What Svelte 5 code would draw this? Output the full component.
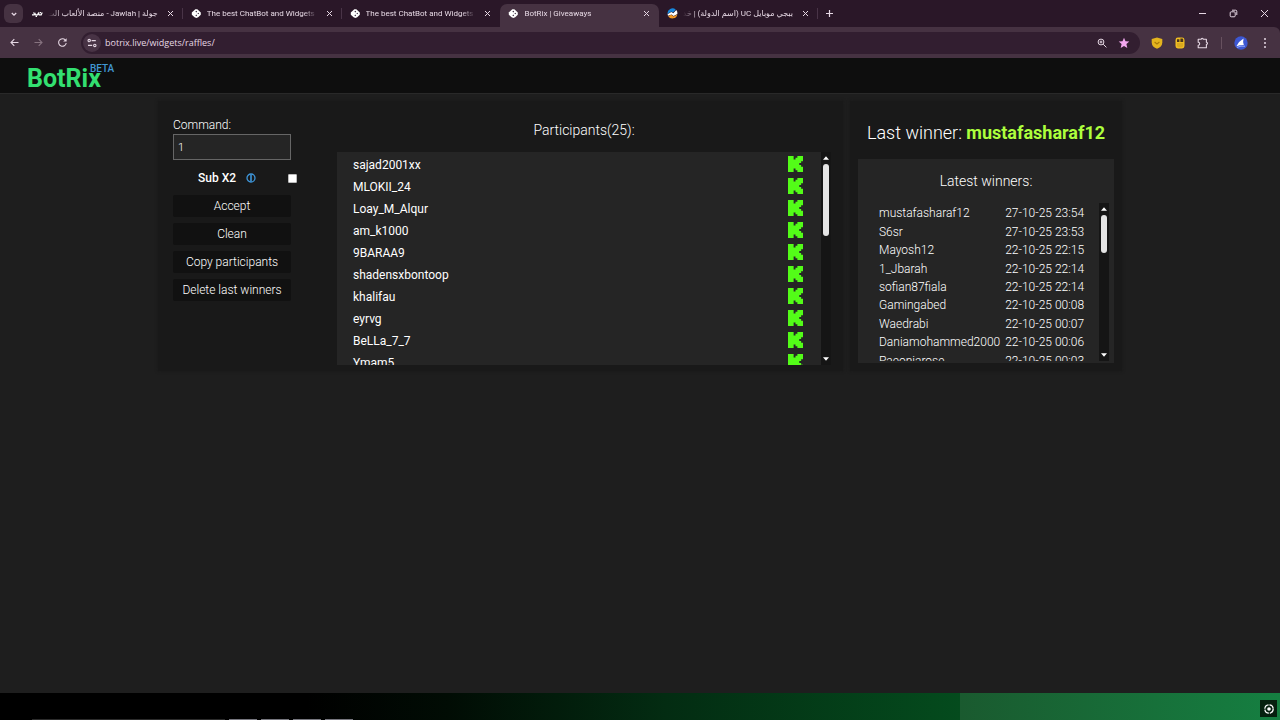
<script>
  const tabs = [
    { title: 'جولة | Jawlah - منصة الألعاب الت', icon: 'jawlah', rtl: true },
    { title: 'The best ChatBot and Widgets f', icon: 'botrix' },
    { title: 'The best ChatBot and Widgets f', icon: 'botrix' },
    { title: 'BotRix | Giveaways', icon: 'botrix', active: true },
    { title: 'ببجي موبايل UC (اسم الدولة) | خد', icon: 'globe', rtl: true }
  ];
  const participants = [
    'sajad2001xx', 'MLOKII_24', 'Loay_M_Alqur', 'am_k1000', '9BARAA9',
    'shadensxbontoop', 'khalifau', 'eyrvg', 'BeLLa_7_7', 'Ymam5'
  ];
  const winners = [
    ['mustafasharaf12', '27-10-25 23:54'],
    ['S6sr', '27-10-25 23:53'],
    ['Mayosh12', '22-10-25 22:15'],
    ['1_Jbarah', '22-10-25 22:14'],
    ['sofian87fiala', '22-10-25 22:14'],
    ['Gamingabed', '22-10-25 00:08'],
    ['Waedrabi', '22-10-25 00:07'],
    ['Daniamohammed2000', '22-10-25 00:06'],
    ['Paeoniarose', '22-10-25 00:03']
  ];
  const actions = ['Accept', 'Clean', 'Copy participants', 'Delete last winners'];
  let command = $state('1');
  let subX2 = $state(false);
</script>

{#snippet cross()}
  <svg width="7" height="7" viewBox="0 0 7 7" fill="none" stroke="currentColor" stroke-width="1"><path d="M1 1l5 5M6 1L1 6" /></svg>
{/snippet}

{#snippet scrollbar()}
  <div class="scrollbar" aria-hidden="true">
    <svg width="6" height="4" viewBox="0 0 6 4" fill="#fff"><path d="M3 0.3L6 3.7H0z" /></svg>
    <div class="track"><div class="thumb"></div></div>
    <svg width="6" height="4" viewBox="0 0 6 4" fill="#fff"><path d="M3 3.7L6 0.3H0z" /></svg>
  </div>
{/snippet}

<div class="screen">
  <header class="browser">
    <div class="strip">
      <button class="search-tabs" aria-label="Search tabs">
        <svg width="8" height="8" viewBox="0 0 8 8" fill="none" stroke="currentColor" stroke-width="1.3"><path d="M1.8 3L4 5.2 6.2 3" /></svg>
      </button>
      <div class="tabs">
        {#each tabs as tab, i}
          <div class="tab" class:active={tab.active} class:divided={i !== 2 && !tab.active}>
            {#if tab.icon === 'jawlah'}
              <svg width="11" height="11" viewBox="0 0 11 11" fill="none" stroke="#fff" stroke-width="1.2"><path d="M0 6.800h2.200l.7-1.500.7 1.500h2l.8-1.600.8 1.600h2l1-2.200M7.600 4.600h1.400M3.600 8.400h1.400M1 5h1" /></svg>
            {:else if tab.icon === 'botrix'}
              <svg width="11" height="11" viewBox="0 0 11 11"><path d="M4.300 1.200h2L9.800 4.500v2.200L7.200 9.300l-1.800.8-1.800-.8L.8 6.700V4.500z" fill="#fff" /><path d="M5.300 2.700l.9.9-.9.9-.9-.9zM7.300 4.700l.8.8-.8.8-.9-.8zM5.300 6.600l.8.8-.8.8-.9-.8z" fill="#33263a" /></svg>
            {:else}
              <svg width="11" height="11" viewBox="0 0 11 11"><path d="M.5 6A5 5 0 0 1 8.800 1.700L6 4.400 4.200 3.500z" fill="#1687dd" /><path d="M.6 6.200l3.700-2.300 2 1.300 3-3.100A5 5 0 0 1 10.400 6L6.600 8 4.400 6.400 1 7.800z" fill="#fff" /><path d="M1.200 8.200l3-1.500L6.600 8.400l3.700-2A5 5 0 0 1 1.200 8.200z" fill="#f49a26" /></svg>
            {/if}
            <span class="title" dir={tab.rtl ? 'rtl' : 'ltr'}>{tab.title}</span>
            <button class="bare" aria-label="Close tab">{@render cross()}</button>
          </div>
        {/each}
      </div>
      <button class="bare plus" aria-label="New tab">
        <svg width="9" height="9" viewBox="0 0 9 9" fill="none" stroke="currentColor" stroke-width="1.2"><path d="M4.5 1v7M1 4.5h7" /></svg>
      </button>
      <div class="window">
        <button class="bare" aria-label="Minimize"><svg width="9" height="9" viewBox="0 0 9 9" stroke="currentColor"><path d="M1 4.5h7" /></svg></button>
        <button class="bare" aria-label="Restore"><svg width="9" height="9" viewBox="0 0 9 9" fill="none" stroke="currentColor"><rect x="1.2" y="2.8" width="5" height="5" rx="1" /><path d="M3 1.2h3.6a1.2 1.2 0 0 1 1.2 1.2V6" /></svg></button>
        <button class="bare" aria-label="Close"><svg width="9" height="9" viewBox="0 0 9 9" stroke="currentColor"><path d="M1 1l7 7M8 1L1 8" /></svg></button>
      </div>
    </div>

    <div class="toolbar">
      <div class="nav">
        <button class="bare" aria-label="Back"><svg width="11" height="11" viewBox="0 0 11 11" fill="none" stroke="currentColor" stroke-width="1.1"><path d="M9.500 5.500h-7.500M5.300 2.200L2 5.500 5.300 8.800" /></svg></button>
        <button class="bare dim" aria-label="Forward"><svg width="11" height="11" viewBox="0 0 11 11" fill="none" stroke="currentColor" stroke-width="1.1"><path d="M1.500 5.500H9M5.700 2.200L9 5.500 5.700 8.800" /></svg></button>
        <button class="bare" aria-label="Reload"><svg width="11" height="11" viewBox="0 0 11 11" fill="none" stroke="currentColor" stroke-width="1.1"><path d="M9.200 6A3.800 3.800 0 1 1 8.300 3" /><path d="M9.600 1.200v3.400H6.200z" fill="currentColor" stroke="none" /></svg></button>
      </div>
      <div class="omnibox">
        <button class="site" aria-label="Site information">
          <svg width="10" height="10" viewBox="0 0 10 10" fill="none" stroke="currentColor" stroke-width="1.1"><circle cx="2.2" cy="2.6" r="1.2" /><path d="M4.600 2.600h4.200M1 7.400h4.200" /><circle cx="7.8" cy="7.4" r="1.2" /></svg>
        </button>
        <input class="url" aria-label="Address" value="botrix.live/widgets/raffles/" />
        <button class="bare" aria-label="Zoom"><svg width="10" height="10" viewBox="0 0 10 10" fill="none" stroke="currentColor"><circle cx="4" cy="4" r="2.9" /><path d="M6.2 6.2l3.2 3.2M2.6 4h2.8M4 2.6v2.8" /></svg></button>
        <button class="bare star" aria-label="Bookmark"><svg width="12" height="12" viewBox="0 0 12 12" fill="currentColor"><path d="M6 .8l1.5 3.5 3.8.3-2.9 2.5.9 3.8L6 8.9l-3.3 2 .9-3.8L.7 4.6l3.8-.3z" /></svg></button>
      </div>
      <div class="extensions">
        <button class="bare" aria-label="Shield"><svg width="12" height="12" viewBox="0 0 12 12"><path d="M6 .4l5.3 1.6v3.4C11.300 8.500 9 10.600 6 11.800 3 10.600.7 8.500.7 5.400V2z" fill="#e3b41e" /><path d="M3.6 5l2.400 2 2.400-2" fill="none" stroke="#a77a08" stroke-width="1.100" /></svg></button>
        <button class="bare" aria-label="Notes"><svg width="10" height="12" viewBox="0 0 10 12"><rect x=".5" y=".5" width="9" height="11" rx="2.400" fill="#f0bd22" /><path d="M2 2.200h2.400V5H2zM5.400 1.600h1.800a1 1 0 0 1 1 1V5H5.400z" fill="#49351c" /><path d="M2 6h6.200v2.400a1.800 1.800 0 0 1-1.800 1.800H3.800A1.800 1.800 0 0 1 2 8.400z" fill="#d9a91f" /></svg></button>
        <button class="bare" aria-label="Extensions"><svg width="12" height="12" viewBox="0 0 12 12" fill="none" stroke="currentColor" stroke-width="1.100"><path d="M1.200 2.200h3a1 1 0 0 1 2 0h3.200v3a1.100 1.100 0 0 1 0 2.200v3.400H1.200V8.200a1.500 1.500 0 0 0 0-3z" stroke-linejoin="round" /></svg></button>
        <span class="rule"></span>
        <button class="bare" aria-label="Profile"><svg width="14" height="14" viewBox="0 0 14 14"><circle cx="7" cy="7" r="6.700" fill="#3c57d2" /><path d="M2.400 10.200Q5 5 9.600 2.500q-1 3 .2 6.500-3.400-.2-7.400 1.200z" fill="#fff" /><path d="M3 11.400q4-2 8-1.200" stroke="#9db3ff" fill="none" /></svg></button>
        <button class="bare menu" aria-label="Menu"><svg width="4" height="12" viewBox="0 0 4 12" fill="currentColor"><circle cx="2" cy="2" r="1" /><circle cx="2" cy="6" r="1" /><circle cx="2" cy="10" r="1" /></svg></button>
      </div>
    </div>
  </header>

  <div class="site-header">
    <a class="brand" href="#home">BotRix<sup>BETA</sup></a>
  </div>

  <main>
    <section class="card giveaway">
      <form class="controls" onsubmit={(e) => e.preventDefault()}>
        <label class="command" for="command">Command:</label>
        <input id="command" class="field" bind:value={command} />
        <div class="sub">
          <label for="sub">Sub X2</label>
          <svg width="10" height="10" viewBox="0 0 10 10" fill="none" stroke="#3e96da" stroke-width="1.300"><circle cx="5" cy="5" r="4" /><path d="M5 1.500v7" stroke-width="1.600" /></svg>
          <input id="sub" type="checkbox" bind:checked={subX2} />
        </div>
        {#each actions as action}
          <button class="action" type="button">{action}</button>
        {/each}
      </form>
      <div class="participants">
        <h2>Participants(25):</h2>
        <div class="scroller">
          <ul>
            {#each participants as name}
              <li>
                <span>{name}</span>
                <svg width="15" height="16" viewBox="0 0 8 9" preserveAspectRatio="none" fill="#53fc18" role="img" aria-label="Kick"><path d="M0 0h3v2h1V1h1V0h3v3H7v1H6v1h1v1h1v3H5V8H4V7H3v2H0z" /></svg>
              </li>
            {/each}
          </ul>
          {@render scrollbar()}
        </div>
      </div>
    </section>

    <section class="card results">
      <h1>Last winner: <strong>mustafasharaf12</strong></h1>
      <div class="latest">
        <h2>Latest winners:</h2>
        <div class="scroller">
          <div class="clip">
            <table>
              <tbody>
                {#each winners as [name, time]}
                  <tr><td>{name}</td><td>{time}</td></tr>
                {/each}
              </tbody>
            </table>
          </div>
          {@render scrollbar()}
        </div>
      </div>
    </section>
  </main>

  <footer>
    <div class="taskbar"><span class="wide"></span><span></span><span></span><span></span><span></span></div>
    <button class="capture" aria-label="Capture">
      <svg width="12" height="12" viewBox="0 0 12 12" fill="none" stroke="#fff"><circle cx="6" cy="6" r="4.200" stroke-width="1.200" stroke-dasharray="5.600 1" /><circle cx="6" cy="6" r="1.800" fill="#fff" stroke="none" /></svg>
    </button>
  </footer>
</div>

<style>
  :global(body) {
    margin: 0;
    background: #1e1e1e;
  }
  .screen {
    min-height: 100vh;
    display: flex;
    flex-direction: column;
    font-family: Roboto, sans-serif;
    font-weight: 300;
    color: #fff;
  }
  button, input {
    font: inherit;
    color: inherit;
  }
  svg {
    display: block;
    flex: none;
  }
  h1, h2, ul {
    margin: 0;
    padding: 0;
    font-weight: 300;
  }
  .bare {
    border: 0;
    padding: 0;
    background: none;
    flex: none;
  }

  /* Browser frame */
  .browser {
    font-family: "Open Sans", "Noto Sans", "DejaVu Sans", sans-serif;
    font-weight: 400;
    color: #e6d8e4;
    background: #2a1728;
  }
  .strip {
    display: flex;
    height: 27px;
    padding-left: 4px;
    align-items: center;
  }
  .search-tabs {
    display: grid;
    place-items: center;
    width: 19px;
    height: 19px;
    flex: none;
    padding: 0;
    border: 0;
    border-radius: 6px;
    background: #463242;
  }
  .tabs {
    display: flex;
    flex: 0 1 794px;
    min-width: 0;
    align-self: stretch;
    padding: 4px 0 0 1px;
  }
  .tab {
    position: relative;
    flex: 1 1 0;
    min-width: 0;
    display: flex;
    align-items: center;
    gap: 5px;
    padding: 0 9px 4px 8px;
    font-family: Roboto, "DejaVu Sans", sans-serif;
    font-size: 8px;
  }
  .title {
    flex: 1;
    overflow: hidden;
    white-space: nowrap;
    line-height: 14px;
    padding-top: 1px;
    margin-right: 4px;
    -webkit-mask-image: linear-gradient(to right, #000 88%, transparent);
    mask-image: linear-gradient(to right, #000 88%, transparent);
  }
  .title[dir="rtl"] {
    -webkit-mask-image: linear-gradient(to left, #000 88%, transparent);
    mask-image: linear-gradient(to left, #000 88%, transparent);
  }
  .tab.active {
    background: #463242;
    border-radius: 7px 7px 0 0;
  }
  .divided::after {
    content: "";
    position: absolute;
    right: 0;
    top: 4px;
    width: 1px;
    height: 11px;
    background: #493447;
  }
  .plus {
    margin-left: 7px;
  }
  .window {
    display: flex;
    gap: 22px;
    margin-left: auto;
    padding-right: 11px;
  }
  .toolbar {
    display: flex;
    align-items: center;
    height: 31px;
    background: #463242;
    border-radius: 0 6px 0 0;
  }
  .nav {
    display: flex;
    gap: 13px;
    padding: 0 13px 0 9px;
  }
  .dim {
    color: #86727f;
  }
  .omnibox {
    flex: 1;
    display: flex;
    align-items: center;
    height: 22px;
    padding: 0 10px 0 2px;
    border-radius: 11px;
    background: #321e30;
  }
  .site {
    display: grid;
    place-items: center;
    width: 18px;
    height: 18px;
    padding: 0;
    border: 0;
    border-radius: 50%;
    background: #483345;
  }
  .url {
    flex: 1;
    min-width: 0;
    padding: 0 0 0 4px;
    border: 0;
    background: none;
    font-size: 9px;
    outline: 0;
  }
  .star {
    margin-left: 11px;
    color: #f3a7ef;
  }
  .extensions {
    display: flex;
    align-items: center;
    gap: 12px;
    padding: 0 13px 0 11px;
  }
  .menu {
    margin-left: 3px;
  }
  .rule {
    width: 1px;
    height: 12px;
    background: #67515f;
  }

  /* Page */
  .site-header {
    height: 35px;
    padding-left: 27px;
    background: #0e0e0e;
    border-bottom: 1px solid #292929;
  }
  .brand {
    display: inline-flex;
    font-size: 25px;
    line-height: 42px;
    font-weight: 700;
    color: #33e071;
    text-decoration: none;
  }
  sup {
    margin-left: -11px;
    font-size: 10px;
    line-height: 22px;
    font-weight: 500;
    color: #4197d3;
  }
  main {
    flex: 1;
    width: 100%;
    max-width: 964px;
    margin: 0 auto;
    padding-top: 7px;
    display: grid;
    grid-template-columns: 685fr 272fr;
    gap: 7px;
    align-items: start;
  }
  .card {
    background: #191919;
    box-shadow: 0 0 3px #191919;
    min-height: 270px;
    box-sizing: border-box;
  }
  .giveaway {
    display: flex;
    gap: 46px;
    padding: 0 12px 6px 15px;
  }
  .controls {
    flex: none;
    width: 118px;
    display: flex;
    flex-direction: column;
    gap: 6px;
    padding-top: 16px;
    font-size: 12px;
    line-height: 16px;
  }
  .command {
    margin-bottom: -5px;
  }
  .field {
    width: 100%;
    height: 26px;
    box-sizing: border-box;
    padding: 0 4px;
    border: 1px solid #666;
    background: #252525;
    font-size: 11px;
  }
  .sub {
    display: flex;
    align-items: center;
    height: 22px;
    gap: 10px;
    padding-left: 25px;
    margin: 1px -6px 0 0;
    font-weight: 500;
  }
  .sub input {
    width: 9px;
    height: 9px;
    margin: 0 0 0 auto;
    appearance: none;
    background: #fff;
    border: 1px solid #bbb;
    border-radius: 1px;
  }
  .sub input:checked {
    background: #3e96da;
  }
  .action {
    height: 22px;
    padding: 0;
    border: 0;
    border-radius: 2px;
    background: #111;
    white-space: nowrap;
  }
  .participants {
    flex: 1;
    min-width: 0;
  }
  .participants h2 {
    font-size: 14px;
    line-height: 20px;
    padding: 19px 0 12px;
    text-align: center;
  }
  .scroller {
    display: flex;
  }
  .participants .scroller {
    height: 213px;
  }
  ul {
    flex: 1;
    overflow: hidden;
    list-style: none;
    background: #252525;
    padding: 1px 18px 0 16px;
    font-size: 12px;
    font-weight: 400;
  }
  li {
    display: flex;
    justify-content: space-between;
    align-items: center;
    height: 22px;
  }
  li span {
    padding-top: 2px;
  }
  .scrollbar {
    flex: none;
    width: 10px;
    display: flex;
    flex-direction: column;
    align-items: center;
    gap: 4px;
    padding: 4px 0;
    box-sizing: border-box;
    background: #151515;
  }
  .track {
    flex: 1;
  }
  .thumb {
    width: 6px;
    height: 38%;
    border-radius: 3px;
    background: #e4e4e4;
  }
  .results {
    padding: 0 8px 8px;
  }
  h1 {
    font-size: 18px;
    line-height: 24px;
    padding: 20px 0 14px;
    text-align: center;
    white-space: nowrap;
  }
  strong {
    font-weight: 700;
    color: #adff3d;
  }
  .latest {
    background: #252525;
    padding: 12px 0 2px;
  }
  .latest h2 {
    font-size: 14px;
    line-height: 20px;
    padding: 0 0 12px;
    text-align: center;
  }
  .latest .scroller {
    height: 158px;
    padding: 0 5px 0 20px;
  }
  .clip {
    flex: 1;
    overflow: hidden;
    padding-top: 1px;
  }
  table {
    height: 166px;
    border-collapse: collapse;
    font-size: 12px;
    line-height: 16px;
  }
  td {
    padding: 0 5px 0 1px;
  }
  td + td {
    padding: 0;
    white-space: nowrap;
  }
  .latest .thumb {
    height: 28%;
  }

  footer {
    position: relative;
    height: 27px;
    display: flex;
    justify-content: flex-end;
    align-items: center;
    padding-right: 3px;
    box-sizing: border-box;
    background:
      linear-gradient(90deg, #1a5a2f, #157f41) right / 25% 100% no-repeat,
      linear-gradient(90deg, #000 24%, #010c04 35%, #032c12 52%, #044b1d 75%);
  }
  .capture {
    display: grid;
    place-items: center;
    width: 17px;
    height: 17px;
    margin-top: 4px;
    padding: 0;
    border: 0;
    background: #06200f;
  }
  .taskbar {
    position: absolute;
    left: 32px;
    bottom: 0;
    display: flex;
    gap: 4px;
  }
  .taskbar span {
    width: 28px;
    height: 1px;
    background: #77777f;
  }
  .taskbar .wide {
    width: 193px;
    background: #2c2c2c;
  }
</style>
